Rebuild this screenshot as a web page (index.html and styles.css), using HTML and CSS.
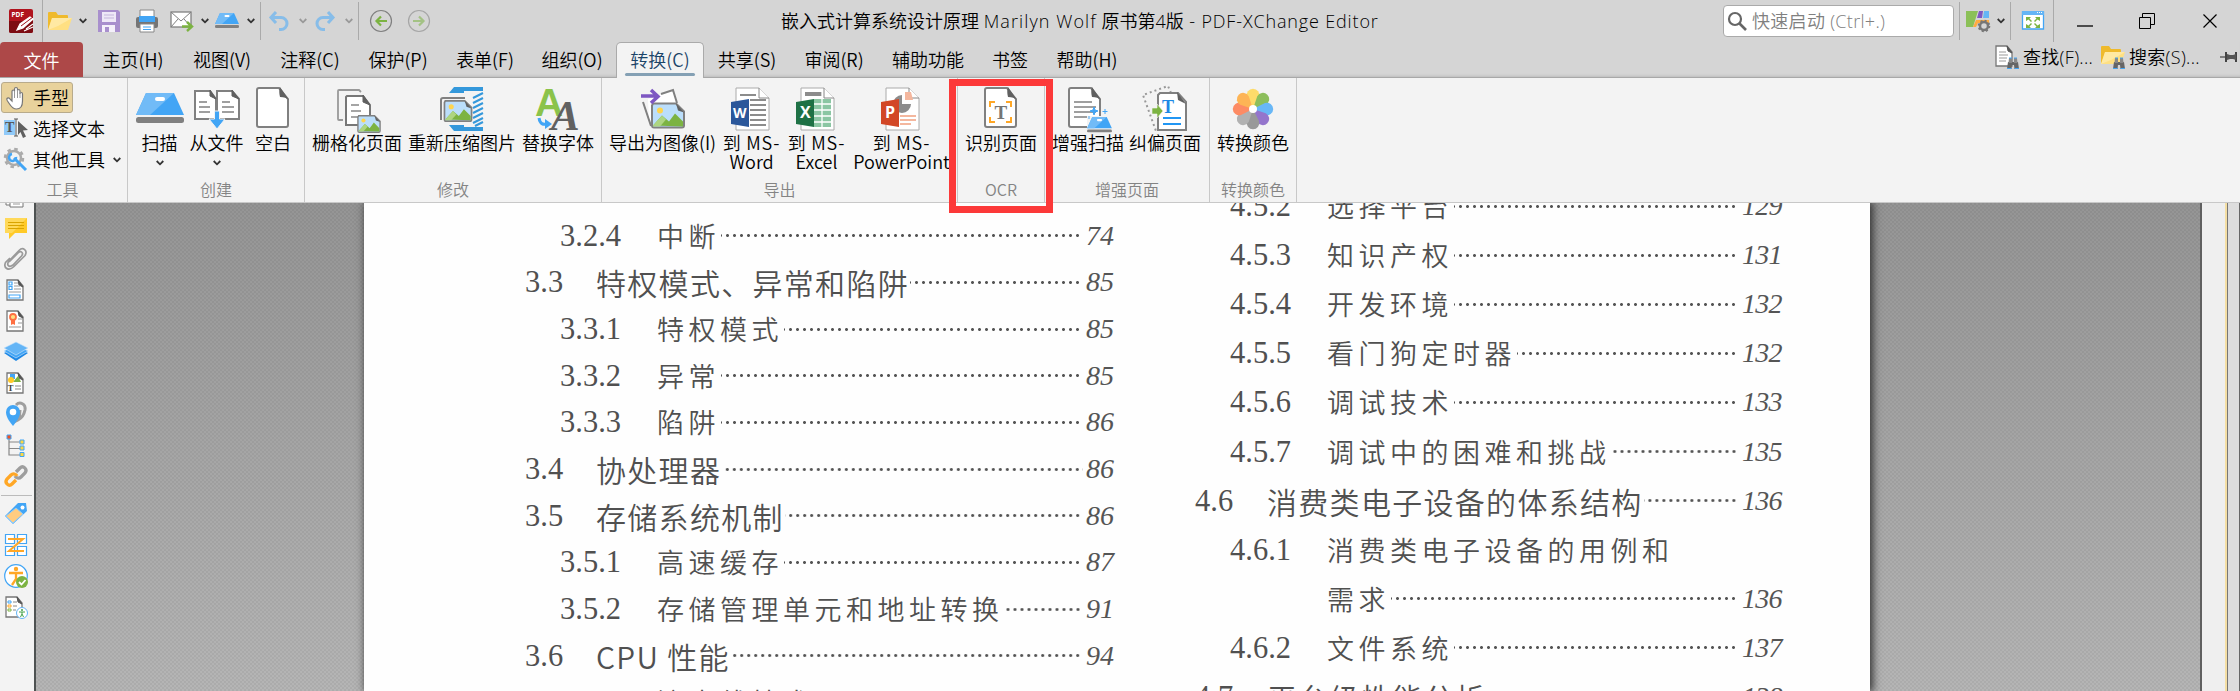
FILE: index.html
```html
<!DOCTYPE html>
<html lang="zh-CN">
<head>
<meta charset="utf-8">
<title>PDF-XChange Editor</title>
<link rel="stylesheet" href="styles.css">
</head>
<body>
<svg class="defs" width="0" height="0">
  <symbol id="chev" viewBox="0 0 8 6"><path d="M.7 1l3.3 3.3L7.300 1" fill="none" stroke="currentColor" stroke-width="1.800"/></symbol>
  <symbol id="scan" viewBox="0 0 48 30"><path d="M10 0h28l10 22H0z" fill="#42a5f5"/><path d="M10 0h28L14 22H0z" fill="#71bbf7"/><rect x="19" y="4" width="10" height="4" rx="2" fill="#fff"/><rect y="24" width="48" height="6" rx="2.500" fill="#808080"/></symbol>
  <symbol id="page" viewBox="0 0 36 44"><path d="M4 2h20l9 11v26a2 2 0 0 1-2 2H4a2 2 0 0 1-2-2V4a2 2 0 0 1 2-2z" fill="#fff" stroke="#808080" stroke-width="2"/><path d="M25 1l9 13c-2-2-5-3-9-3-1-4-1-7 0-10z" fill="#606060"/></symbol>
  <symbol id="spage" viewBox="0 0 18 22"><path d="M1 1h11l5 6v14H1z" fill="#fff" stroke="#777" stroke-width="1.300"/><path d="M12 1l5 7-4-2z" fill="#555" stroke="#555"/></symbol>
  <symbol id="pic" viewBox="0 0 34 26"><path d="M2 1h23l8 8v14a2 2 0 0 1-2 2H3a2 2 0 0 1-2-2V3z" fill="#bbdefb" stroke="#808080" stroke-width="2"/><path d="M2 23l9-10 7 6 6-8 8 8v5z" fill="#7cb342"/><path d="M2 23l9-10 4 4-6 7H2z" fill="#aed581"/><circle cx="9" cy="8" r="3" fill="#ffd54f"/><path d="M25 1l8 9-6-2z" fill="#606060"/></symbol>
  <symbol id="bino" viewBox="0 0 12 12"><path d="M1 5h10l1 7H7.500L7 8H5l-.5 4H0z" fill="#666"/><path d="M2 1h3v5H1.500zM7 1h3l.5 5H7z" fill="#888"/><path d="M2 1h3M7 1h3M0 11.500h4.500M7.500 11.500H12" stroke="#42a5f5"/></symbol>
  <symbol id="folder" viewBox="0 0 24 20"><path d="M0 18V2q0-1 1-1h7l2 3h9q1 0 1 1v13z" fill="#efba2c"/><path d="M4 7h20l-4 12H0z" fill="#ffe082"/><path d="M4 7h20l-14 8-10 4z" fill="#ffecb0" opacity=".7"/></symbol>
</svg>

<header class="titlebar">
  <svg class="i24 m9" viewBox="0 0 24 24"><rect width="24" height="24" rx="2" fill="#b0131d"/><path d="M0 12h24v10a2 2 0 0 1-2 2H2a2 2 0 0 1-2-2z" fill="#7d0c12"/><text x="2.500" y="8" class="logo-t">PDF</text><path d="M8 21l3-6L21 8l3 2-10 9zM17 20l7-5M15 22l9-4" fill="#fff" stroke="#fff" stroke-width="1.200"/><path d="M12 17L24 8" stroke="#9b1018"/></svg>
  <i class="vsep full m9"></i>
  <svg class="i24 m5" viewBox="0 -2 24 24"><use href="#folder" width="24" height="20"/></svg>
  <svg class="chev m7"><use href="#chev"/></svg>
  <svg class="i24 m10" viewBox="0 0 24 24"><path d="M1 1h20l2 2v20H1z" fill="#a88fcd"/><path d="M5 3h14v10H5z" fill="#eee8f7"/><path d="M7 6h10M7 9h10" stroke="#c4b5dc"/><path d="M5 16h13v7H5z" fill="#f4f0fa"/><path d="M8 18h4v5H8z" fill="#a88fcd"/></svg>
  <svg class="i24 m14" viewBox="0 0 24 24"><path d="M5 1h14v8H5z" fill="#fff" stroke="#888"/><rect x="1" y="8" width="22" height="11" rx="2" fill="#757575"/><path d="M4 7h16v6H4z" fill="#42a5f5"/><path d="M5 15h14v8H5z" fill="#fff" stroke="#888"/><path d="M8 18h8M8 20.500h8" stroke="#42a5f5"/></svg>
  <svg class="i24 m11" viewBox="0 0 24 24"><rect x="1" y="3" width="20" height="15" fill="#fff" stroke="#808080" stroke-width="1.300"/><path d="M1 3l10 9L21 3M1 18l7-8M21 18l-7-8" fill="none" stroke="#808080"/><path d="M12 17.500h9M17 13l5 4.500-5 4.500" fill="none" stroke="#7cb342" stroke-width="2.400"/></svg>
  <svg class="chev m7"><use href="#chev"/></svg>
  <svg class="i24 m6" viewBox="0 -4 24 24"><use href="#scan" width="24" height="15"/></svg>
  <svg class="chev m8"><use href="#chev"/></svg>
  <i class="vsep m5"></i>
  <svg class="i24 m6 pale" viewBox="0 0 24 24"><path d="M9 3L4 8.500 9 14M4 8.500h10a6 6 0 0 1 0 12h-2" fill="none" stroke="#6cb4ef" stroke-width="3"/></svg>
  <svg class="chev m8 dim"><use href="#chev"/></svg>
  <svg class="i24 m6 pale" viewBox="0 0 24 24"><path d="M15 3l5 5.500-5 5.500M20 8.500H10a6 6 0 0 0 0 12h2" fill="none" stroke="#6cb4ef" stroke-width="3"/></svg>
  <svg class="chev m8 dim"><use href="#chev"/></svg>
  <i class="vsep m5"></i>
  <svg class="i24 m10" viewBox="0 0 24 24"><circle cx="12" cy="12" r="10.500" fill="none" stroke="#808080" stroke-width="1.200"/><path d="M18 12H8M12 7.500L7.500 12l4.500 4.500" fill="none" stroke="#7cb342" stroke-width="2.200"/></svg>
  <svg class="i24 m14 half" viewBox="0 0 24 24"><circle cx="12" cy="12" r="10.500" fill="none" stroke="#808080" stroke-width="1.200"/><path d="M6 12h10M12 7.500l4.500 4.500-4.500 4.500" fill="none" stroke="#7cb342" stroke-width="2.200"/></svg>
  <h1 class="title">嵌入式计算系统设计原理 <span class="author">Marilyn Wolf</span> 原书第4版<span class="app"> - PDF-XChange Editor</span></h1>
  <div class="quick"><svg width="20" height="20" viewBox="0 0 20 20"><circle cx="8" cy="8" r="6" fill="none" stroke="#666" stroke-width="2.200"/><path d="M12 12l7 7" stroke="#666" stroke-width="2.600"/></svg><span>快速启动 (Ctrl+.)</span></div>
  <i class="vsep m5"></i>
  <svg class="i24 m6" viewBox="0 0 24 24"><path d="M0 2h12L7 18H0z" fill="#8bc057"/><path d="M13 2h4l-1 7h-5z" fill="#7e57c2"/><path d="M18 2h5v7h-6z" fill="#64b5f6"/><path d="M10 11h13v3H12l-2 4H7z" fill="#ffab40"/><circle cx="18" cy="17" r="4" fill="none" stroke="#777" stroke-width="2.500"/><circle cx="18" cy="17" r="5.300" fill="none" stroke="#777" stroke-width="2" stroke-dasharray="2 2.160"/></svg>
  <svg class="chev m7"><use href="#chev"/></svg>
  <i class="vsep m5"></i>
  <svg class="i24 m10" viewBox="0 0 24 24"><path d="M1.500 3h21v17h-21z" fill="#fff" stroke="#42a5f5" stroke-width="1.300"/><path d="M1 2h22v4H1z" fill="#64b5f6"/><path d="M16 3.500h5" stroke="#fff" stroke-dasharray="1 1"/><path d="M5 8h5L8.500 9.500 11 12l-1 1-2.500-2.500L5 12zM19 8h-5l1.500 1.500L13 12l1 1 2.500-2.500L19 12zM5 19h5l-1.500-1.500L11 15l-1-1-2.500 2.500L5 15zM19 19h-5l1.500-1.500L13 15l1-1 2.500 2.500L19 15z" fill="#7cb342"/></svg>
  <i class="vsep full m8"></i>
  <svg class="win m23" viewBox="0 0 16 16"><path d="M0 13h16" stroke="#000" stroke-width="1.300"/></svg>
  <svg class="win m46" viewBox="0 0 16 16"><path d="M.5 4.500h11v11H.5zM3.500 4.500v-4h12v11h-4" fill="none" stroke="#000"/></svg>
  <svg class="win m47" viewBox="0 0 16 16"><path d="M1.500 1.500l13 13M14.500 1.500l-13 13" stroke="#000" stroke-width="1.200"/></svg>
</header>

<nav class="tabs">
  <span class="tab file">文件</span>
  <span class="tab first">主页(H)</span><span class="tab">视图(V)</span><span class="tab">注释(C)</span><span class="tab">保护(P)</span><span class="tab w86">表单(F)</span><span class="tab">组织(O)</span><span class="tab active">转换(C)</span><span class="tab w86">共享(S)</span><span class="tab">审阅(R)</span><span class="tab w100">辅助功能</span><span class="tab w64">书签</span><span class="tab w90">帮助(H)</span>
  <div class="finders">
    <svg class="i24" viewBox="0 0 24 24"><use href="#spage" width="18" height="22"/><path d="M4 7h7M4 10h9M4 13h8M4 16h7" stroke="#999"/><use href="#bino" x="12" y="12" width="12" height="12"/></svg><span>查找(F)...</span>
    <svg class="i24 m8" viewBox="0 0 24 24"><use href="#folder" width="24" height="20"/><use href="#bino" x="12" y="12" width="12" height="12"/></svg><span>搜索(S)...</span>
    <svg class="pin" width="17" height="12" viewBox="0 0 17 12"><path d="M0 6h6" stroke="#444" stroke-width="1.200"/><path d="M6 1v10M16 1v10" stroke="#444" stroke-width="2"/><path d="M7 3l3 1h3l3-1v6l-3-1h-3l-3 1z" fill="#555"/></svg>
  </div>
</nav>

<section class="ribbon">
  <div class="group tools">
    <div class="tool on"><svg class="i24" viewBox="0 0 24 24"><path d="M8 15V5.500c0-2 2.500-2 2.500 0V3c0-2 3-2 3 0v2c0-2 2.500-2 2.500 0v3c0-2 2.500-2 2.500 0v7c0 5-2 8-6 8-5 0-6-4-9-8-2-3 1-4 2.500-2z" fill="#fff" stroke="#777" stroke-width="1.200"/><path d="M10.500 5v7M13.500 4v8M16 6v6" stroke="#999"/></svg>手型</div>
    <div class="tool"><svg class="i24" viewBox="0 0 24 24"><path d="M0 3h11v15H0z" fill="#90caf9"/><text x="1" y="15" class="serif-t">T</text><path d="M10 2h4M12 2v17M10 19h4" stroke="#555" fill="none"/><path d="M14 4l10 9-5 .5 3 6-3 1.500-2.500-6L14 18z" fill="#606060"/></svg>选择文本</div>
    <div class="tool"><svg class="i24" viewBox="0 0 24 24"><circle cx="10" cy="10" r="7" fill="none" stroke="#aaa" stroke-width="2.500"/><circle cx="10" cy="10" r="9" fill="none" stroke="#aaa" stroke-width="2.500" stroke-dasharray="3.500 3.560"/><path d="M10 10l12 12" stroke="#42a5f5" stroke-width="3"/><path d="M8 6a3.500 3.500 0 1 0 4 3" fill="none" stroke="#42a5f5" stroke-width="2.500"/></svg>其他工具<svg class="chev m8"><use href="#chev"/></svg></div>
    <b class="cap">工具</b>
  </div>
  <div class="group create">
    <div class="row">
      <div class="btn b57"><svg class="i48" viewBox="0 0 48 48"><use href="#scan" y="8" width="48" height="30"/></svg>扫描<svg class="chev"><use href="#chev"/></svg></div>
      <div class="btn b57"><svg class="i48" viewBox="0 0 48 48"><path d="M2 6h15l6 8v20H2zM24 6h15l7 8v20H24z" fill="#fff" stroke="#808080" stroke-width="2"/><path d="M17 5l6 9-6-3zM39 5l7 9-7-3z" fill="#606060" stroke="#606060"/><path d="M6 17h8M6 22h11M6 27h11M29 17h8M29 22h12M29 27h12" stroke="#808080" stroke-width="1.500"/><path d="M21.500 26h5v8H32l-8 10-8-10h5.500z" fill="#42a5f5" stroke="#f3f3f3"/></svg>从文件<svg class="chev"><use href="#chev"/></svg></div>
      <div class="btn b56"><svg class="i48" viewBox="0 0 48 48"><use href="#page" x="6" y="1" width="36" height="44"/></svg>空白</div>
    </div>
    <b class="cap">创建</b>
  </div>
  <div class="group modify">
    <div class="row">
      <div class="btn b96"><svg class="i48" viewBox="0 0 48 48"><path d="M10 35H6q-1 0-1-1V6q0-1 1-1h20l2 2" fill="none" stroke="#999" stroke-width="1.800"/><path d="M14 11h16l7 9v20H13V12z" fill="#fff" stroke="#777" stroke-width="2"/><path d="M30 10l7 10-7-3z" fill="#606060" stroke="#606060"/><path d="M18 20h8M18 26h10M18 32h8" stroke="#888" stroke-width="1.500"/><use href="#pic" x="24" y="30" width="24" height="18"/></svg>栅格化页面</div>
      <div class="btn b114"><svg class="i48" viewBox="0 0 48 48"><path d="M11 8l5-6h29v4H26v2zM11 40l5 6h29v-4H26v-2z" fill="#3498db"/><path d="M3 35V15q0-2 2-2h22" fill="none" stroke="#808080" stroke-width="2"/><use href="#pic" x="5" y="15" width="30" height="22"/><path d="M35 13l10-5M35 18l10-5M35 23l10-5M35 28l10-5M35 33l10-5M35 38l10-5M37 41l8-4" stroke="#3498db" stroke-width="2"/></svg>重新压缩图片</div>
      <div class="btn b78"><svg class="i48" viewBox="0 0 48 48"><text x="1" y="31" class="fa">A</text><text x="17" y="45" class="fb">A</text><path d="M5 33c1 6 4 7 8 6" fill="none" stroke="#42a5f5" stroke-width="3"/><path d="M11 34l7 5-7 5z" fill="#42a5f5"/></svg>替换字体</div>
    </div>
    <b class="cap">修改</b>
  </div>
  <div class="group export">
    <div class="row">
      <div class="btn b114"><svg class="i48" viewBox="0 0 48 48"><path d="M9 14l24-8 5 12-28 18z" fill="#fff"/><path d="M4 17l8 24M22 9l12-4 4 13" fill="none" stroke="#808080" stroke-width="2"/><use href="#pic" x="12" y="17" width="34" height="27"/><path d="M2 11h16M12 5l7 6.500-7 6.500" fill="none" stroke="#7e57c2" stroke-width="3.500"/></svg>导出为图像(I)</div>
      <div class="btn b64"><svg class="i48" viewBox="0 0 48 48"><path d="M8 3h23l10 10v32H8z" fill="#fff" stroke="#aaa"/><path d="M31 3v10h10" fill="#fff" stroke="#888"/><path d="M12 10h16M22 15h16M22 20h16M22 25h16M22 30h16M22 35h16M22 40h16" stroke="#8c8c8c" stroke-width="1.800"/><path d="M3 17l18-3v28L3 39z" fill="#2b579a"/><text x="5" y="33" class="ms w">W</text></svg><span class="ms-l">到 MS-</span><span>Word</span></div>
      <div class="btn b66"><svg class="i48" viewBox="0 0 48 48"><path d="M8 3h23l10 10v32H8z" fill="#fff" stroke="#aaa"/><path d="M31 3v10h10" fill="#fff" stroke="#888"/><path d="M12 7h17v4H12z" fill="#8c8c8c"/><path d="M21 14h17v28H21z" fill="#8bc6a3"/><path d="M29 7v35M21 19h17M21 25h17M21 31h17M21 37h17" stroke="#fff" stroke-width="1.300"/><path d="M3 17l18-3v28L3 39z" fill="#1e7145"/><text x="7" y="33" class="ms">X</text></svg><span class="ms-l">到 MS-</span><span>Excel</span></div>
      <div class="btn b104"><svg class="i48" viewBox="0 0 48 48"><path d="M8 3h23l10 10v32H8z" fill="#fff" stroke="#aaa"/><path d="M31 3v10h10" fill="#fff" stroke="#888"/><path d="M24 10v9h9a9 9 0 1 1-9-9z" fill="#8c8c8c"/><path d="M27 7h6l2 8h-8z" fill="#f4b79e"/><path d="M22 31h16M22 35h16M22 39h11" stroke="#f4b79e" stroke-width="2"/><path d="M3 17l18-3v28L3 39z" fill="#d24726"/><text x="7" y="33" class="ms">P</text></svg><span class="ms-l">到 MS-</span><span class="ppt">PowerPoint</span></div>
    </div>
    <b class="cap">导出</b>
  </div>
  <div class="group ocr">
    <div class="row"><div class="btn b78"><svg class="i48" viewBox="0 0 48 48"><use href="#page" x="6" y="1" width="36" height="44"/><path d="M13 22v-5h5M29 17h5v5M13 32v5h5M29 37h5v-5" fill="none" stroke="#ffa726" stroke-width="2"/><text x="17.500" y="33.500" class="ocr-t">T</text></svg>识别页面</div></div>
    <b class="cap">OCR</b>
    <span class="marker"></span>
  </div>
  <div class="group enhance">
    <div class="row">
      <div class="btn b76"><svg class="i48" viewBox="0 0 48 48"><use href="#page" x="3" y="1" width="36" height="44"/><path d="M10 17h18M10 22h22M10 27h22M10 32h16" stroke="#808080" stroke-width="1.500"/><path d="M23 31h25v18H23z" fill="#f3f3f3"/><use href="#scan" x="23" y="32" width="25" height="15.500"/><path d="M30 22l1 3 3 1-3 1-1 3-1-3-3-1 3-1zM41 24v5M38.500 26.500h5M25 31v3" stroke="#42a5f5" fill="#42a5f5"/></svg>增强扫描</div>
      <div class="btn b78"><svg class="i48" viewBox="0 0 48 48"><path d="M30 8L27 1 2 10l13 36" fill="none" stroke="#999" stroke-width="2" stroke-dasharray="2 3"/><path d="M19 8h18l8 9v28H17V10z" fill="#fff" stroke="#808080" stroke-width="2"/><path d="M36 7l9 12-8-4z" fill="#606060"/><text x="21" y="28" class="desk-t">T</text><path d="M22 33h18M22 39h18" stroke="#2196f3" stroke-width="2"/><path d="M11 23h5v-4l6 7-6 7v-4h-5z" fill="#7cb342" stroke="#f3f3f3" stroke-width=".6"/></svg>纠偏页面</div>
    </div>
    <b class="cap">增强页面</b>
  </div>
  <div class="group color">
    <div class="row"><div class="btn b78"><svg class="i48" viewBox="-24 -24 48 48"><g opacity=".9"><path d="M0 0L-6 -12A6.300 6.300 0 1 1 6 -12z" fill="#ffd95c"/><path d="M0 0L-6 -12A6.300 6.300 0 1 1 6 -12z" transform="rotate(45)" fill="#81b94c"/><path d="M0 0L-6 -12A6.300 6.300 0 1 1 6 -12z" transform="rotate(90)" fill="#59b1f7"/><path d="M0 0L-6 -12A6.300 6.300 0 1 1 6 -12z" transform="rotate(135)" fill="#8a68c8"/><path d="M0 0L-6 -12A6.300 6.300 0 1 1 6 -12z" transform="rotate(180)" fill="#909090"/><path d="M0 0L-6 -12A6.300 6.300 0 1 1 6 -12z" transform="rotate(225)" fill="#aaa"/><path d="M0 0L-6 -12A6.300 6.300 0 1 1 6 -12z" transform="rotate(270)" fill="#ff8055"/><path d="M0 0L-6 -12A6.300 6.300 0 1 1 6 -12z" transform="rotate(315)" fill="#ffae45"/></g><circle r="4" fill="#fff"/></svg>转换颜色</div></div>
    <b class="cap">转换颜色</b>
  </div>
</section>

<main class="work">
  <aside class="side">
    <svg class="i24" viewBox="0 0 24 24"><path d="M2 8v12h4M6 8h13v14H6z" fill="#fff" stroke="#777"/><path d="M9 16h7M9 19h7" stroke="#999"/></svg>
    <svg class="i24" viewBox="0 0 24 24"><path d="M1 2h22v15H11l-6 6v-6H1z" fill="#ffca28"/><path d="M1 2h22L8 17H1z" fill="#ffd95a"/><path d="M4 6.500h16M4 9.500h16M4 12.500h16" stroke="#d9a400"/></svg>
    <svg class="i24" viewBox="0 0 24 24"><path d="M5 15l9-9c3-3 6 0 3.500 3L9 18c-4 3-7 0-4-4L15 3.500c4-4 9 0 6 5L10 19.500c-5 5-11 2-8.500-4L6 11" fill="none" stroke="#9a9a9a" stroke-width="1.700"/></svg>
    <svg class="i24" viewBox="0 0 24 24"><use href="#spage" x="2" y="1" width="18" height="22"/><path d="M5 4h3v3H5zM5 8.500h3v3H5zM5 17h11v3H5z" fill="none" stroke="#42a5f5" stroke-width="1.200"/><path d="M10 5h4M10 8h6M10 11h7M5 14h12" stroke="#999"/></svg>
    <svg class="i24" viewBox="0 0 24 24"><use href="#spage" x="2" y="1" width="18" height="22"/><circle cx="9" cy="8" r="3" fill="#ffe082" stroke="#ff7043" stroke-width="1.800"/><path d="M7 11v5l2-1 2 1v-5" fill="#ff7043"/><path d="M14 10h4M14 14h4M5 18h12" stroke="#999"/></svg>
    <svg class="i24" viewBox="0 0 24 24"><path d="M12 7l12 6-12 8L0 13z" fill="#1e88e5"/><path d="M12 5l12 6-12 7L0 11z" fill="#42a5f5" stroke="#cfe6fb" stroke-width=".6"/><path d="M12 2l12 6-12 7L0 8z" fill="#64b5f6" stroke="#cfe6fb" stroke-width=".6"/></svg>
    <svg class="i24" viewBox="0 0 24 24"><use href="#spage" x="2" y="1" width="18" height="22"/><path d="M6 3h5v5H6z" fill="#42a5f5"/><path d="M9 11l5-6 3 6z" fill="#7cb342"/><circle cx="7" cy="9" r="3" fill="#ffca28"/><text x="3.500" y="20" class="side-t">T</text><path d="M11 15h6M11 18h6" stroke="#888"/></svg>
    <svg class="i24" viewBox="0 0 24 24"><path d="M12 3c4-4 10-1 9 5-1 5-3 8-7 10 2-4 2-6 2-10" fill="none" stroke="#9e9e9e" stroke-width="3"/><path d="M9 24C4 18 2 14 2 10a7 7 0 0 1 14 0c0 4-2 8-7 14z" fill="#42a5f5"/><circle cx="9" cy="10" r="3.300" fill="#fff"/></svg>
    <svg class="i24" viewBox="0 0 24 24"><path d="M5 4v18h12M5 9h12M5 15.500h12" fill="none" stroke="#888" stroke-width="1.200"/><path d="M3 2h4v4H3z" fill="#f4511e" stroke="#42a5f5"/><path d="M16 7h4v4h-4zM16 13h4v4h-4zM16 19.500h4v4h-4z" fill="#ffd740" stroke="#42a5f5"/></svg>
    <svg class="i24" viewBox="0 0 24 24"><path d="M12 8l4-4c3-3 8 1 5 5l-4 4c-2 2-5 1-6-1" fill="none" stroke="#9e9e9e" stroke-width="3.300"/><path d="M12 16l-4 4c-3 3-8-1-5-5l4-4c2-2 5-1 6 1" fill="none" stroke="#ffa726" stroke-width="3.300"/></svg>
    <hr>
    <svg class="i24" viewBox="0 0 24 24"><path d="M14 1h8l1 8L9 22l-8-8z" fill="#42a5f5"/><path d="M12 6l7 6-10 9-7-7z" fill="#ffcc80" stroke="#90caf9"/><circle cx="18.500" cy="5.500" r="2" fill="#fff"/></svg>
    <svg class="i24" viewBox="0 0 24 24"><path d="M1.500 1.500h9v9h-9zM13.500 1.500h9v9h-9zM1.500 13.500h9v9h-9zM13.500 13.500h9v9h-9z" fill="#fff" stroke="#42a5f5" stroke-width="1.200"/><path d="M4 6h15L5 18h15" fill="none" stroke="#ffa726" stroke-width="2"/></svg>
    <svg class="i24" viewBox="0 0 24 24"><circle cx="12" cy="12" r="11.300" fill="#fff" stroke="#42a5f5" stroke-width="1.200"/><circle cx="12" cy="5" r="2.200" fill="#ffa726"/><path d="M5 9h14M12 9v6l-4 6M12 14l3 5" fill="none" stroke="#ffa726" stroke-width="2.300"/><circle cx="18" cy="18" r="6" fill="#7cb342"/><path d="M15 18l2.500 2.500L21.500 16" fill="none" stroke="#fff" stroke-width="1.800"/></svg>
    <svg class="i24" viewBox="0 0 24 24"><use href="#spage" x="1" y="1" width="18" height="22"/><path d="M4 6h3v2H4z" fill="#fff" stroke="#42a5f5"/><path d="M4 10h3v2H4z" fill="#fff" stroke="#ffa726"/><path d="M4 14h3v2H4z" fill="#fff" stroke="#7cb342"/><path d="M9 7h4M9 11h4M9 15h3" stroke="#888"/><circle cx="18" cy="18" r="5.500" fill="#fff" stroke="#64b5f6"/><path d="M15 17h6M18 17v2l-1.500 3M18 19l1.500 3" stroke="#43a047" fill="none"/><circle cx="18" cy="15" r="1" fill="#43a047"/></svg>
  </aside>
  <div class="canvas">
    <div class="sheet">
      <ol class="toc left">
        <li class="sub"><span>3.2.4</span><b>中断</b><i></i><em>74</em></li>
        <li class="sec"><span>3.3</span><b>特权模式、异常和陷阱</b><i></i><em>85</em></li>
        <li class="sub"><span>3.3.1</span><b>特权模式</b><i></i><em>85</em></li>
        <li class="sub"><span>3.3.2</span><b>异常</b><i></i><em>85</em></li>
        <li class="sub"><span>3.3.3</span><b>陷阱</b><i></i><em>86</em></li>
        <li class="sec"><span>3.4</span><b>协处理器</b><i></i><em>86</em></li>
        <li class="sec"><span>3.5</span><b>存储系统机制</b><i></i><em>86</em></li>
        <li class="sub"><span>3.5.1</span><b>高速缓存</b><i></i><em>87</em></li>
        <li class="sub"><span>3.5.2</span><b>存储管理单元和地址转换</b><i></i><em>91</em></li>
        <li class="sec"><span>3.6</span><b>CPU 性能</b><i></i><em>94</em></li>
        <li class="sub"><span>3.6.1</span><b>流水线技术</b><i></i><em>94</em></li>
      </ol>
      <ol class="toc right">
        <li class="sub"><span>4.5.2</span><b>选择平台</b><i></i><em>129</em></li>
        <li class="sub"><span>4.5.3</span><b>知识产权</b><i></i><em>131</em></li>
        <li class="sub"><span>4.5.4</span><b>开发环境</b><i></i><em>132</em></li>
        <li class="sub"><span>4.5.5</span><b>看门狗定时器</b><i></i><em>132</em></li>
        <li class="sub"><span>4.5.6</span><b>调试技术</b><i></i><em>133</em></li>
        <li class="sub"><span>4.5.7</span><b>调试中的困难和挑战</b><i></i><em>135</em></li>
        <li class="sec"><span>4.6</span><b>消费类电子设备的体系结构</b><i></i><em>136</em></li>
        <li class="sub"><span>4.6.1</span><b>消费类电子设备的用例和</b></li>
        <li class="sub"><span></span><b>需求</b><i></i><em>136</em></li>
        <li class="sub"><span>4.6.2</span><b>文件系统</b><i></i><em>137</em></li>
        <li class="sec"><span>4.7</span><b>平台级性能分析</b><i></i><em>138</em></li>
      </ol>
    </div>
  </div>
  <div class="gutter"></div>
  <div class="edge"></div>
</main>
</body>
</html>
```

FILE: styles.css
```css
* { box-sizing: border-box; }
body {
  margin: 0;
  width: 2240px;
  height: 691px;
  overflow: hidden;
  background: #d5d5d5;
  color: #000;
  font: 18px/19px "Noto Sans CJK SC", sans-serif;
  font-weight: 350;
  display: flex;
  flex-direction: column;
}
svg { display: block; flex: none; overflow: visible; }
.defs { position: absolute; }
.i24 { width: 24px; height: 24px; }
.i48 { width: 48px; height: 48px; }
.chev { width: 8px; height: 6px; color: #333; }
.dim { color: #999; }
.pale { opacity: .75; }
.half { opacity: .55; }
.m5 { margin-left: 5px; }
.m6 { margin-left: 6px; }
.m7 { margin-left: 7px; }
.m8 { margin-left: 8px; }
.m9 { margin-left: 9px; }
.m10 { margin-left: 10px; }
.m11 { margin-left: 11px; }
.m14 { margin-left: 14px; }
.m23 { margin-left: 23px; }
.m46 { margin-left: 46px; }
.m47 { margin-left: 47px; }

/* title bar */
.titlebar { height: 42px; flex: none; display: flex; align-items: center; padding-right: 22px; }
.vsep { width: 1px; height: 38px; background: #aaa; flex: none; }
.vsep.full { height: 42px; }
.title { flex: 1; margin: 0 0 0 350px; font: 18px/42px "Open Sans", "Noto Sans CJK SC", sans-serif; font-weight: 350; white-space: nowrap; }
.author { letter-spacing: 1.1px; }
.app { letter-spacing: .85px; }
.quick {
  width: 231px; height: 32px; display: flex; align-items: center; gap: 5px; padding-left: 3px;
  background: #fff; border: 1px solid #aaa; border-radius: 4px; color: #808080;
  font-family: "Open Sans", "Noto Sans CJK SC", sans-serif;
}
.quick span { letter-spacing: .3px; }
.win { width: 16px; height: 16px; }
.logo-t { font: bold 6.5px "Open Sans", sans-serif; fill: #fff; }

/* ribbon tabs */
.tabs { height: 36px; flex: none; display: flex; border-bottom: 1px solid #a8a8a8; box-shadow: inset 0 -3px 3px -2px #bbb; }
.tab { width: 88px; line-height: 34px; text-align: center; white-space: nowrap; }
.file { width: 83px; background: #ad4848; color: #fff; border-radius: 4px 4px 0 0; line-height: 36px; }
.first { width: 90px; margin-left: 5px; }
.w86 { width: 86px; }
.w100 { width: 100px; }
.w64 { width: 64px; }
.w90 { width: 90px; }
.active {
  height: 36px; color: #1b4468; background: #f3f3f3; border: 1px solid #aaa; border-bottom: 0;
  border-radius: 5px 5px 0 0; display: flex; flex-direction: column; align-items: center; line-height: 33px;
}
.active::after { content: ""; width: 70px; height: 3px; margin-top: -3px; background: #84a0b4; border-radius: 2px; flex: none; }
.finders {
  margin-left: auto; padding: 0 3px 5px 0; display: flex; align-items: center; white-space: nowrap;
  font-family: "Open Sans", "Noto Sans CJK SC", sans-serif;
}
.finders span { width: 74px; padding-left: 4px; letter-spacing: .3px; }
.pin { margin-left: 21px; }

/* ribbon */
.ribbon { height: 125px; flex: none; display: flex; background: #f3f3f3; border-bottom: 1px solid #c8c8c8; }
.group {
  position: relative; height: 124px; border-right: 1px solid #c8c8c8; flex: none;
  display: flex; flex-direction: column; align-items: center; padding-top: 7px;
}
.cap { margin-top: auto; height: 25px; font-size: 16px; font-weight: 350; color: #848484; line-height: 24px; white-space: nowrap; }
.tools { width: 128px; padding: 4px 0 0 1px; align-items: flex-start; }
.tools .cap { width: 123px; text-align: center; }
.create { width: 177px; }
.modify { width: 297px; }
.export { width: 356px; }
.ocr { width: 87px; }
.enhance { width: 165px; }
.color { width: 87px; }
.tool { height: 31px; display: flex; align-items: center; padding: 0 3px; white-space: nowrap; }
.tool .i24 { margin-right: 5px; }
.tool.on { background: #e8d29c; border: 1px solid #b8ab8c; border-radius: 3px; padding-left: 2px; }
.row { display: flex; }
.btn { display: flex; flex-direction: column; align-items: center; white-space: nowrap; height: 88px; }
.btn .chev { margin-top: 8px; }
.b56 { width: 56px; }
.b57 { width: 57px; }
.b64 { width: 64px; }
.b66 { width: 66px; }
.b76 { width: 76px; }
.b78 { width: 78px; }
.b96 { width: 96px; }
.b104 { width: 104px; }
.b114 { width: 114px; }
.ms-l { letter-spacing: .8px; }
.marker { position: absolute; left: -9px; top: 1px; width: 104px; height: 134px; border: 7px solid #fc3939; z-index: 2; }
.serif-t { font: bold 14px "Liberation Serif", serif; fill: #555; }
.side-t { font: bold 9px "Liberation Serif", serif; fill: #444; }
.ocr-t { font: bold 19px "Liberation Serif", serif; fill: #757575; }
.desk-t { font: bold 18px "Liberation Serif", serif; fill: #1e88e5; }
.fa { font: bold 39px "Liberation Sans", sans-serif; fill: #8bc34a; }
.fb { font: italic bold 43px "Liberation Serif", serif; fill: #616161; }
.ms { font: bold 16px "Open Sans", sans-serif; fill: #fff; }
.ms.w { font-size: 14px; }

/* document area */
.work { flex: 1; min-height: 0; display: flex; overflow: hidden; }
.side {
  width: 36px; background: #f3f3f3; border-right: 2px solid #4e5252; flex: none;
  display: flex; flex-direction: column; align-items: center; gap: 7px; padding-right: 2px;
}
.side > :first-child { margin-top: -18px; }
.side hr { width: 31px; height: 1px; margin: 0; border: 0; background: #bbb; }
.side hr + svg { margin-top: -1px; }
.canvas {
  width: 2166px; flex: none; padding-left: 328px; border-right: 2px solid #606060;
  background: repeating-conic-gradient(rgba(0,0,0,.05) 0 25%, transparent 0 50%) 0 0 / 4px 4px, linear-gradient(#959595, #b5b5b5);
}
.sheet {
  width: 1506px; height: 488px; background: #fefefe; box-shadow: 2px 0 8px 1px #333;
  display: flex; align-items: flex-start; color: #505050;
}
.toc { list-style: none; margin: 0; padding: 0; flex: none; }
.left { width: 589px; margin: 10px 0 0 161px; }
.right { width: 587px; margin: -21px 0 0 81px; }
.toc li { display: flex; align-items: center; height: 46.67px; white-space: nowrap; }
.right li { height: 49.1px; }
.toc span { font: 30.5px "Liberation Serif", serif; width: 71px; flex: none; }
.right .sec span { width: 72px; }
.toc b { font-weight: 350; font-size: 30px; letter-spacing: 1.3px; line-height: 44px; margin-top: -1px; }
.toc .sub { padding-left: 35px; }
.toc .sub span { width: 97px; }
.toc .sub b { font-size: 27px; letter-spacing: 4.5px; }
.toc i { flex: 1; height: 3px; margin: 0 3px 1px 1px; background: radial-gradient(circle at 1.5px 1.5px, #555 1.1px, transparent 1.8px) right top / 7px 3px; }
.toc em { font: italic 28px "Liberation Serif", serif; color: #555; margin-bottom: 1px; }
.right em { letter-spacing: -.8px; width: 40px; }
.gutter { width: 25px; flex: none; background: #efefef; border-right: 2px solid #f5dfa4; }
.edge { flex: 1; background: #ddd; border-left: 1px solid #777; border-right: 1px solid #666; }
```
